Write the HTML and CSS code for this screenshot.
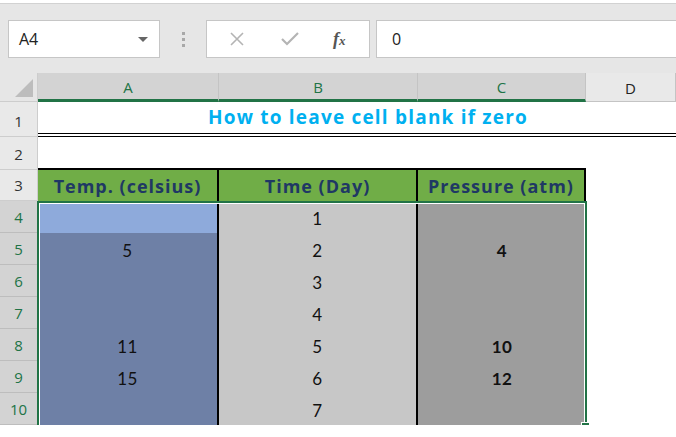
FILE: index.html
```html
<!DOCTYPE html>
<html lang="en">
<head>
<meta charset="utf-8" />
<title>How to leave cell blank if zero</title>
<link rel="stylesheet" href="styles.css">
</head>
<body>
<div class="toolbar">
	<div class="namebox">
		<span>A4</span>
		<svg class="caret" width="10" height="6" viewBox="0 0 10 6"><polygon points="0,0 10,0 5,5" fill="#666"/></svg>
	</div>
	<div class="dots"><i></i><i></i><i></i></div>
	<div class="buttons">
		<svg width="16" height="16" viewBox="0 0 16 16"><path d="M2 2 L14 14 M14 2 L2 14" stroke="#b4b4b4" stroke-width="1.6" fill="none"/></svg>
		<svg width="18" height="16" viewBox="0 0 18 16"><path d="M1 8 L6 13 L17 2" stroke="#b4b4b4" stroke-width="2.2" fill="none"/></svg>
		<span class="fx">f<small>x</small></span>
	</div>
	<div class="formula">0</div>
</div>

<div class="grid">
	<div class="corner"><svg width="18" height="18" viewBox="0 0 18 18"><polygon points="18,0 18,18 0,18" fill="#bdbdbd"/></svg></div>
	<div class="colhead sel">A</div>
	<div class="colhead sel">B</div>
	<div class="colhead sel">C</div>
	<div class="colhead">D</div>

	<div class="rowhead">1</div>
	<div class="title"><span>How to leave cell blank if zero</span></div>

	<div class="rowhead">2</div>
	<div class="blank under"></div>
	<div class="blank"></div>

	<div class="rowhead">3</div>
	<div class="head">Temp. (celsius)</div>
	<div class="head">Time (Day)</div>
	<div class="head">Pressure (atm)</div>
	<div class="blank"></div>

	<div class="rowhead sel">4</div>
	<div class="cell a active"></div><div class="cell b">1</div><div class="cell c"></div><div class="blank"></div>
	<div class="rowhead sel">5</div>
	<div class="cell a">5</div><div class="cell b">2</div><div class="cell c">4</div><div class="blank"></div>
	<div class="rowhead sel">6</div>
	<div class="cell a"></div><div class="cell b">3</div><div class="cell c"></div><div class="blank"></div>
	<div class="rowhead sel">7</div>
	<div class="cell a"></div><div class="cell b">4</div><div class="cell c"></div><div class="blank"></div>
	<div class="rowhead sel">8</div>
	<div class="cell a">11</div><div class="cell b">5</div><div class="cell c">10</div><div class="blank"></div>
	<div class="rowhead sel">9</div>
	<div class="cell a">15</div><div class="cell b">6</div><div class="cell c">12</div><div class="blank"></div>
	<div class="rowhead sel">10</div>
	<div class="cell a"></div><div class="cell b">7</div><div class="cell c"></div><div class="blank"></div>

	<div class="selection"><div class="handle"></div></div>
</div>
</body>
</html>
```

FILE: styles.css
```css
body {
	margin: 0;
	padding: 0;
	font-family: "Lato", "Liberation Sans", sans-serif;
	background: #fff;
	overflow: hidden;
}

/* formula bar */
.toolbar {
	height: 70px;
	background: #e6e6e6;
	border-top: 1px solid #d2d2d2;
	margin-top: 3px;
	display: flex;
	align-items: flex-start;
	padding: 16px 0 0 8px;
	box-sizing: border-box;
}
.namebox {
	width: 152px;
	height: 38px;
	box-sizing: border-box;
	background: #fff;
	border: 1px solid #c6c6c6;
	display: flex;
	align-items: center;
	justify-content: space-between;
	padding: 0 11px 0 10px;
	font-family: "Open Sans", "Liberation Sans", sans-serif;
	font-size: 16px;
	color: #222;
}
.caret {
	margin-top: 1px;
}
.dots {
	width: 46px;
	height: 38px;
	display: flex;
	flex-direction: column;
	align-items: center;
	justify-content: center;
	gap: 3px;
}
.dots i {
	width: 3px;
	height: 3px;
	background: #a8a8a8;
}
.buttons {
	width: 164px;
	height: 38px;
	box-sizing: border-box;
	background: #fff;
	border: 1px solid #c6c6c6;
	display: flex;
	align-items: center;
	padding-left: 22px;
	gap: 36px;
}
.fx {
	font-family: "Liberation Serif", serif;
	font-style: italic;
	font-weight: bold;
	font-size: 18px;
	color: #555;
	margin-left: -2px;
}
.fx small {
	font-size: 13px;
}
.formula {
	flex: 1;
	height: 38px;
	box-sizing: border-box;
	margin-left: 6px;
	background: #fff;
	border: 1px solid #c6c6c6;
	border-right: none;
	display: flex;
	align-items: center;
	padding-left: 15px;
	font-family: "Open Sans", "Liberation Sans", sans-serif;
	font-size: 16px;
	color: #222;
}

/* sheet */
.grid {
	position: relative;
	display: grid;
	grid-template-columns: 38px 181px 199px 168px 1fr;
	grid-template-rows: 29px 35px 33px 31px repeat(7, 32px);
	font-size: 17px;
	color: #111;
}
.grid > div {
	box-sizing: border-box;
}
.corner {
	background: #e6e6e6;
	border-right: 1px solid #cdcdcd;
	border-bottom: 1px solid #cdcdcd;
	display: flex;
	align-items: flex-end;
	justify-content: flex-end;
	padding: 0 4px 4px 0;
}
.colhead {
	background: #e9e9e9;
	border-right: 1px solid #c4c4c4;
	border-bottom: 1px solid #c4c4c4;
	display: flex;
	align-items: center;
	justify-content: center;
	font-family: "Open Sans", "Liberation Sans", sans-serif;
	font-size: 15px;
	color: #222;
	padding-top: 1px;
}
.colhead.sel {
	background: #d3d3d3;
	color: #217346;
	border-bottom: 3px solid #217346;
}
.rowhead {
	background: #e9e9e9;
	border-right: 1px solid #cdcdcd;
	border-bottom: 1px solid #cdcdcd;
	display: flex;
	align-items: flex-end;
	justify-content: center;
	padding-bottom: 5px;
	font-family: "Open Sans", "Liberation Sans", sans-serif;
	font-size: 15px;
	color: #333;
}
.rowhead.sel {
	background: #d3d3d3;
	color: #217346;
	border-bottom-color: #bdbdbd;
}
.title {
	grid-column: 2 / -1;
	border-bottom: 4px double #000;
	display: flex;
	align-items: flex-end;
	justify-content: center;
	padding: 0 0 3px 22px;
	font-family: "Open Sans", "Liberation Sans", sans-serif;
	font-size: 19px;
	font-weight: bold;
	letter-spacing: 1.2px;
	color: #00b0f0;
}
.blank.under {
	grid-column: 2 / 5;
	border-bottom: 2px solid #000;
}
.head {
	background: #70ad47;
	border-right: 2px solid #000;
	display: flex;
	align-items: flex-end;
	justify-content: center;
	padding-bottom: 3px;
	font-family: "Open Sans", "Liberation Sans", sans-serif;
	font-size: 18px;
	font-weight: bold;
	letter-spacing: 1px;
	color: #1f3864;
}
.cell {
	display: flex;
	align-items: flex-end;
	justify-content: center;
	padding-bottom: 4px;
	letter-spacing: 0.5px;
}
.cell.a {
	background: #6e80a6;
	border-right: 2px solid #000;
}
.cell.a.active {
	background: #8eaadb;
}
.cell.b {
	background: #c7c7c7;
	border-right: 2px solid #000;
}
.cell.c {
	background: #9d9d9d;
	font-weight: bold;
}

/* selection outline over A4:C10 */
.selection {
	position: absolute;
	left: 37px;
	top: 128px;
	width: 550px;
	height: 227px;
	box-sizing: border-box;
	border: 2px solid #217346;
	box-shadow: inset 0 0 0 1px #fff;
}
.handle {
	position: absolute;
	right: -5px;
	bottom: -5px;
	width: 7px;
	height: 7px;
	background: #217346;
	border: 1px solid #fff;
}
```
